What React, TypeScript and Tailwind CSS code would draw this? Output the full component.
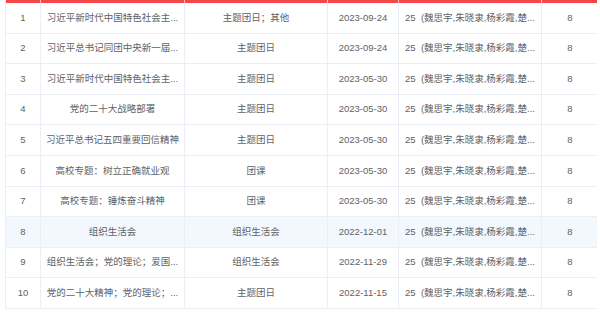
const COLS = [
  'w-[35px]',
  'w-[144px]',
  'w-[143px]',
  'w-[71px]',
  'w-[143px]',
  'w-[56px]',
]

type Row = {
  no: number
  title: string
  type: string
  date: string
  people: string
  hours: string
}

const PEOPLE = '25  (魏思宇,朱晓隶,杨彩霞,楚...'

const ROWS: Row[] = [
  { no: 1, title: '习近平新时代中国特色社会主...', type: '主题团日；其他', date: '2023-09-24', people: PEOPLE, hours: '8' },
  { no: 2, title: '习近平总书记同团中央新一届...', type: '主题团日', date: '2023-09-24', people: PEOPLE, hours: '8' },
  { no: 3, title: '习近平新时代中国特色社会主...', type: '主题团日', date: '2023-05-30', people: PEOPLE, hours: '8' },
  { no: 4, title: '党的二十大战略部署', type: '主题团日', date: '2023-05-30', people: PEOPLE, hours: '8' },
  { no: 5, title: '习近平总书记五四重要回信精神', type: '主题团日', date: '2023-05-30', people: PEOPLE, hours: '8' },
  { no: 6, title: '高校专题：树立正确就业观', type: '团课', date: '2023-05-30', people: PEOPLE, hours: '8' },
  { no: 7, title: '高校专题：锤炼奋斗精神', type: '团课', date: '2023-05-30', people: PEOPLE, hours: '8' },
  { no: 8, title: '组织生活会', type: '组织生活会', date: '2022-12-01', people: PEOPLE, hours: '8' },
  { no: 9, title: '组织生活会；党的理论；爱国...', type: '组织生活会', date: '2022-11-29', people: PEOPLE, hours: '8' },
  { no: 10, title: '党的二十大精神；党的理论；...', type: '主题团日', date: '2022-11-15', people: PEOPLE, hours: '8' },
]

function Cell({ w, children, last }: { w: string; children: React.ReactNode; last?: boolean }) {
  return (
    <div className={`${w} shrink-0 h-full flex items-center justify-center ${last ? '' : 'border-r border-[#ebeef5]'}`}>
      <span className="whitespace-pre">{children}</span>
    </div>
  )
}

export default function App() {
  return (
    <div className="w-[600px] h-[315px] bg-white overflow-hidden" style={{ fontFamily: '"Liberation Sans", "Noto Sans CJK SC", sans-serif' }}>
      <div className="ml-[5px] w-[592px] border-l border-[#ebeef5] text-[9.5px] text-[#606266]">
        <div className="flex h-[3px] bg-[#f5474b]">
          {COLS.map((w, i) => (
            <div key={i} className={`${w} shrink-0 h-full ${i < COLS.length - 1 ? 'border-r border-[#fbb]' : ''}`} />
          ))}
        </div>
        {ROWS.map((r) => (
          <div key={r.no} className={`flex h-[30.6px] border-b border-[#ebeef5] ${r.no === 8 ? 'bg-[#f2f8fe]' : ''}`}>
            <Cell w={COLS[0]}>{r.no}</Cell>
            <Cell w={COLS[1]}>{r.title}</Cell>
            <Cell w={COLS[2]}>{r.type}</Cell>
            <Cell w={COLS[3]}>{r.date}</Cell>
            <Cell w={COLS[4]}>{r.people}</Cell>
            <Cell w={COLS[5]} last>{r.hours}</Cell>
          </div>
        ))}
      </div>
    </div>
  )
}
